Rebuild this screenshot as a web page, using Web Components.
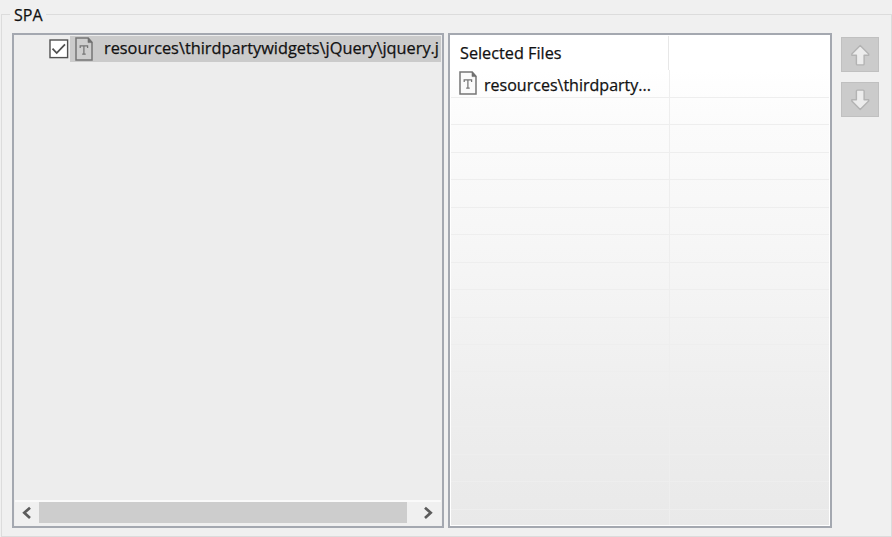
<!DOCTYPE html>
<html lang="en"><head><meta charset="utf-8"><title>SPA</title>
<style>
html,body{margin:0;height:100%;background:#f0f0f0;overflow:hidden}
body{font:16.6px "Open Sans","Noto Sans",sans-serif;color:#111}
</style></head><body>
<spa-group></spa-group>
<script>
function define(name, html, setup){
  customElements.define(name, class extends HTMLElement{
    constructor(){super();this.attachShadow({mode:'open'}).innerHTML=html;}
    connectedCallback(){if(setup)setup(this,this.shadowRoot);}
  });
}
// Label fitted to a fixed width
define('fit-label', `<style>:host{display:block;flex:none;height:24px}svg{display:block;overflow:visible}text{fill:#111;stroke:#111;stroke-width:.25px}</style>
<svg height="24"><text x="0" y="18" lengthAdjust="spacingAndGlyphs"></text></svg>`, (el,r)=>{
  const w=el.getAttribute('width');
  r.querySelector('svg').setAttribute('width',w);
  const t=r.querySelector('text');
  t.setAttribute('textLength',w);
  t.textContent=el.getAttribute('text');
});
define('file-icon', `<style>:host{display:block;flex:none;width:18px;height:24px}svg{display:block}</style>
<svg width="18" height="24" viewBox="0 0 18 24"><path d="M1 1H13.2L17 5.4V23H1Z" fill="var(--paper,#fafafa)" stroke="#757575" stroke-width="1.5"/><path d="M13 1V5.6H17Z" fill="#707070" stroke="#707070" stroke-width=".6"/><path d="M5.2 10.9V8.8H12.6V10.9M8.9 8.8V16.8M7.2 17H10.7" fill="none" stroke="#747474" stroke-width="1.25"/></svg>`);
define('check-box', `<style>:host{display:block;flex:none;width:20px;height:20px}svg{display:block}</style>
<svg width="20" height="20"><rect x="1" y="1" width="17.6" height="17.6" fill="#fff" stroke="#505050" stroke-width="1.4"/><path d="M3.5 9.6L7.7 14L16 5.3" fill="none" stroke="#505050" stroke-width="1.8"/></svg>`);
define('scroll-bar', `<style>:host{display:grid;grid-template-columns:24px 368px 1fr;height:26px;box-sizing:border-box;border-top:2px solid #fafafa;background:#f0f0f0;padding-bottom:3px}
div{background:#cdcdcd}svg{display:block}path{fill:none;stroke:#5c5c5c;stroke-width:2.7}</style>
<svg width="24" height="21"><path d="M15 5.7L9.3 10.8L15 15.9"/></svg><div></div><svg width="34" height="21"><path d="M18 5.7L23.7 10.8L18 15.9"/></svg>`);
define('file-tree', `<style>:host{display:flex;flex-direction:column;justify-content:space-between;box-sizing:border-box;width:432px;height:495px;border:1px solid #a4a8b0;box-shadow:inset 0 0 0 1px #a4a8b0;background:#ededed;padding:2px 2px 1px}
.row{display:flex;height:26px;padding-left:34px}
check-box{margin-top:3px}
.sel{display:flex;margin-left:1px;background:#cbcbcb;flex:1;min-width:0;padding-left:5px;--paper:#cecece}
file-icon{margin-top:1px;margin-right:11px}</style>
<div class="row"><check-box></check-box><div class="sel"><file-icon></file-icon><fit-label width="335" text="resources\\thirdpartywidgets\\jQuery\\jquery.j"></fit-label></div></div>
<scroll-bar></scroll-bar>`);
define('selected-table', `<style>:host{display:block;box-sizing:border-box;width:384px;height:495px;border:1px solid #a4a8b0;box-shadow:inset 0 0 0 1px #a4a8b0;background:#fff;padding:2px;overflow:hidden}
.wrap{height:489px;background:linear-gradient(#fff 0,#fff 34px,#fbfbfb 90px,#f5f5f5 235px,#eee 365px,#e9e9e9 100%)}
.row{display:grid;grid-template-columns:219px 1fr;height:27.45px;box-sizing:border-box;border-bottom:1px solid #eee}
.cell{display:flex;border-right:1px solid #eee}
.head{height:34px;border:0;grid-template-columns:218px 1fr}
.head .cell{border-right:1.5px solid #e7e7e7;padding:5px 0 0 9px}
.first .cell{padding-left:8px;gap:7px}
.first file-icon{margin-top:1px}
.first fit-label{margin-top:3px}
.rows{height:455px;overflow:hidden}
.first{height:28px}</style>
<div class="wrap"><div class="row head"><div class="cell"><fit-label width="101.5" text="Selected Files"></fit-label></div></div>
<div class="rows"><div class="row first"><div class="cell"><file-icon></file-icon><fit-label width="167" text="resources\\thirdparty..."></fit-label></div></div></div></div>`, (el,r)=>{
  const rows=r.querySelector('.rows');
  for(let i=0;i<16;i++){const d=document.createElement('div');d.className='row';d.innerHTML='<div class="cell"></div>';rows.append(d);}
});
define('move-button', `<style>:host{display:block}button{display:block;width:38px;height:35px;padding:0;border:1px solid #c0c0c0;background:#cbcbcb}svg{display:block}
:host([down]) path{transform:translateY(34px) scaleY(-1)}</style>
<button disabled><svg width="36" height="33"><path d="M18.2 7.4L26.7 16V17.2H22.1V25.9Q22.1 26.9 21.1 26.9H15.4Q14.4 26.9 14.4 25.9V17.2H9.8V16Z" fill="#ececec" stroke="#b3b3b3" stroke-width="1.4" stroke-linejoin="round"/></svg></button>`);
define('spa-group', `<style>:host{display:block;box-sizing:border-box;height:537px;padding:4px 0 0 1px}
fieldset{box-sizing:border-box;margin:0;width:891px;min-width:0;height:533px;border:1px solid #dcdcdc;padding:0 0 0 10px}
legend{margin-left:-2px;padding:0 3px 0 4px;height:21px;box-sizing:border-box}
legend fit-label{margin-top:-1px}
.body{display:flex;margin-top:8px}
selected-table{margin-left:4px}
.buttons{display:flex;flex-direction:column;gap:10px;margin:4px 0 0 9px}</style>
<fieldset><legend><fit-label width="28.5" text="SPA"></fit-label></legend>
<div class="body"><file-tree></file-tree><selected-table></selected-table><div class="buttons"><move-button></move-button><move-button down></move-button></div></div></fieldset>`);
</script></body></html>
